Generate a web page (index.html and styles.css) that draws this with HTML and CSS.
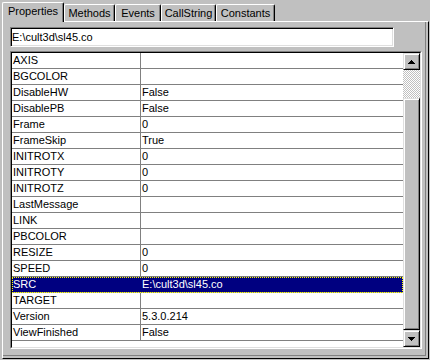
FILE: index.html
```html
<!DOCTYPE html>
<html lang="en">
<head>
    <meta charset="UTF-8">
    <title>Properties</title>
    <link rel="stylesheet" href="styles.css">
</head>
<body>
    <div class="window">
        <div class="tabs">
            <div class="tab active w-props">Properties</div>
            <div class="tab w-methods">Methods</div>
            <div class="tab w-events">Events</div>
            <div class="tab w-call">CallString</div>
            <div class="tab w-const">Constants</div>
        </div>
        <div class="panel">
            <div class="addr">E:\cult3d\sl45.co</div>
            <div class="grid">
                <div class="rows">
                    <div class="row"><div class="name">AXIS</div><div class="value"></div></div>
                    <div class="row"><div class="name">BGCOLOR</div><div class="value"></div></div>
                    <div class="row"><div class="name">DisableHW</div><div class="value">False</div></div>
                    <div class="row"><div class="name">DisablePB</div><div class="value">False</div></div>
                    <div class="row"><div class="name">Frame</div><div class="value">0</div></div>
                    <div class="row"><div class="name">FrameSkip</div><div class="value">True</div></div>
                    <div class="row"><div class="name">INITROTX</div><div class="value">0</div></div>
                    <div class="row"><div class="name">INITROTY</div><div class="value">0</div></div>
                    <div class="row"><div class="name">INITROTZ</div><div class="value">0</div></div>
                    <div class="row"><div class="name">LastMessage</div><div class="value"></div></div>
                    <div class="row"><div class="name">LINK</div><div class="value"></div></div>
                    <div class="row"><div class="name">PBCOLOR</div><div class="value"></div></div>
                    <div class="row"><div class="name">RESIZE</div><div class="value">0</div></div>
                    <div class="row"><div class="name">SPEED</div><div class="value">0</div></div>
                    <div class="row selected"><div class="name">SRC</div><div class="value">E:\cult3d\sl45.co</div></div>
                    <div class="row"><div class="name">TARGET</div><div class="value"></div></div>
                    <div class="row"><div class="name">Version</div><div class="value">5.3.0.214</div></div>
                    <div class="row"><div class="name">ViewFinished</div><div class="value">False</div></div>
                </div>
                <div class="scrollbar">
                    <div class="sb-btn">
                        <svg width="7" height="4" viewBox="0 0 7 4"><path d="M3 0h1v1h1v1h1v1h1v1H0V3h1V2h1V1h1z" fill="#000"/></svg>
                    </div>
                    <div class="sb-track"></div>
                    <div class="sb-thumb"></div>
                    <div class="sb-btn">
                        <svg width="7" height="4" viewBox="0 0 7 4"><path d="M0 0h7v1H6v1H5v1H4v1H3V3H2V2H1V1H0z" fill="#000"/></svg>
                    </div>
                </div>
            </div>
        </div>
    </div>
</body>
</html>
```

FILE: styles.css
```css
body {
    margin: 0;
    background-color: #c0c0c0;
    font-family: "Liberation Sans", Arial, sans-serif;
    font-size: 11px;
    color: #000;
    width: 430px;
    height: 360px;
    overflow: hidden;
}

.window {
    padding-left: 2px;
}

/* tab strip */
.tabs {
    display: flex;
    align-items: flex-end;
    height: 21px;
    position: relative;
    z-index: 1;
}

.tab {
    height: 17px;
    box-sizing: border-box;
    border: 1px solid #fff;
    border-bottom: 0;
    border-right-color: #000;
    border-radius: 2px 2px 0 0;
    box-shadow: inset -1px 0 #808080;
    background-color: #c0c0c0;
    padding-top: 1px;
    line-height: 14px;
    text-align: center;
    white-space: nowrap;
}

.tab.active {
    height: 20px;
    margin-bottom: -1px;
}

.w-props { width: 62px; }
.w-methods { width: 51px; }
.w-events { width: 46px; }
.w-call { width: 55px; }
.w-const { width: 59px; }

/* page body */
.panel {
    width: 427px;
    height: 338px;
    box-sizing: border-box;
    border: 1px solid;
    border-color: #fff #000 #000 #fff;
    box-shadow: inset -2px -2px #c0c0c0, inset -3px -3px #808080;
    padding: 5px 0 0 7px;
}

.addr {
    width: 384px;
    height: 20px;
    box-sizing: border-box;
    border: 1px solid;
    border-color: #808080 #fff #fff #808080;
    box-shadow: inset 1px 1px #000, inset -1px -1px #dfdfdf;
    background-color: #fff;
    line-height: 18px;
    padding-left: 1px;
}

.grid {
    display: flex;
    margin-top: 4px;
    width: 412px;
    height: 298px;
    box-sizing: border-box;
    border: 1px solid;
    border-color: #808080 #fff #fff #808080;
    background-color: #fff;
    padding: 1px;
    position: relative;
}

.grid::before {
    content: "";
    position: absolute;
    inset: 0;
    border: 1px solid;
    border-color: #000 #dfdfdf #dfdfdf #000;
    pointer-events: none;
}

.rows {
    flex: 1;
}

.row {
    display: flex;
    height: 16px;
    box-sizing: border-box;
    border-bottom: 1px solid #808080;
    line-height: 15px;
    white-space: nowrap;
}

.row .name {
    width: 129px;
    box-sizing: border-box;
    border-right: 1px solid #808080;
    padding-left: 1px;
}

.row .value {
    flex: 1;
    padding-left: 1px;
}

.row.selected {
    background-color: #000080;
    color: #fff;
    outline: 1px dotted #ffff00;
    outline-offset: -1px;
}

.row.selected .name {
    border-right-color: #000080;
}

/* scrollbar */
.scrollbar {
    width: 17px;
    display: flex;
    flex-direction: column;
}

.sb-btn, .sb-thumb {
    box-sizing: border-box;
    border: 1px solid;
    border-color: #dfdfdf #000 #000 #dfdfdf;
    box-shadow: inset 1px 1px #fff, inset -1px -1px #808080;
    background-color: #c0c0c0;
}

.sb-btn {
    height: 17px;
    display: flex;
    align-items: center;
    justify-content: center;
}

.sb-btn svg {
    display: block;
    shape-rendering: crispEdges;
}

.sb-track {
    height: 28px;
    background: repeating-conic-gradient(#c0c0c0 0 25%, #fff 0 50%) 0 0 / 2px 2px;
}

.sb-thumb {
    flex: 1;
}
```
